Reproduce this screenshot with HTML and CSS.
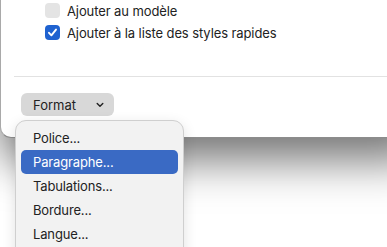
FILE: index.html
```html
<!DOCTYPE html>
<html lang="fr">
<head>
	<meta charset="UTF-8">
	<title>Format</title>
<link rel="stylesheet" href="styles.css">
</head>
<body>
<div class="stage">
	<div class="window">
		<div class="options">
			<label class="option"><span class="box"></span>Ajouter au modèle</label>
			<label class="option"><span class="box checked"><svg width="11" height="11" viewBox="0 0 11 11"><path d="M2 5.8 L4.4 8.3 L9 2.6" fill="none" stroke="#fff" stroke-width="1.9" stroke-linecap="round" stroke-linejoin="round"/></svg></span>Ajouter à la liste des styles rapides</label>
		</div>
		<div class="separator"></div>
		<div class="footer">
			<div class="popup_btn">Format<svg class="chevron" width="8" height="6" viewBox="0 0 8 6"><path d="M1.2 1.5 L4 4.3 L6.8 1.5" fill="none" stroke="#222" stroke-width="1.4" stroke-linecap="round" stroke-linejoin="round"/></svg></div>
		</div>
	</div>

	<ul class="menu">
		<li class="menu_item">Police...</li>
		<li class="menu_item selected">Paragraphe...</li>
		<li class="menu_item">Tabulations...</li>
		<li class="menu_item">Bordure...</li>
		<li class="menu_item">Langue...</li>
	</ul>
</div>
</body>
</html>
```
FILE: styles.css
```css
	body{
		margin: 0;
		background: #fff;
		font-family: Inter, "Liberation Sans", sans-serif;
		font-size: 13px;
		color: #222;
		overflow: hidden;
	}
	.stage{
		position: relative;
		width: 387px;
		height: 247px;
		overflow: hidden;
	}
	.window{
		width: 420px;
		height: 137px;
		background: #fff;
		border-left: 1px solid #a9a9a9;
		border-bottom: 1px solid #8c8c8c;
		border-bottom-left-radius: 11px;
		box-shadow: 0 22px 45px rgba(0,0,0,0.55);
		display: flex;
		flex-direction: column;
	}
	.options{
		display: flex;
		flex-direction: column;
		gap: 7px;
		padding: 3px 0 0 44px;
	}
	.option{
		display: flex;
		align-items: center;
		gap: 7px;
		height: 15px;
		letter-spacing: -0.1px;
	}
	.box{
		width: 15px;
		height: 15px;
		border-radius: 4px;
		background: #e4e4e4;
		display: flex;
		align-items: center;
		justify-content: center;
	}
	.checked{
		background: #1f62d0;
	}
	.separator{
		height: 1px;
		background: #e2e2e2;
		margin: 36px 0 0 13px;
	}
	.footer{
		padding: 16px 0 0 20px;
	}
	.popup_btn{
		width: 71px;
		height: 23px;
		padding: 0 10px 0 12px;
		border-radius: 6px;
		background: #d8d8d8;
		display: flex;
		align-items: center;
		justify-content: space-between;
	}
	.menu{
		position: absolute;
		left: 15px;
		top: 120px;
		width: 157px;
		height: 140px;
		margin: 0;
		padding: 5px;
		list-style: none;
		background: #f2f2f2;
		border: 1px solid #cfcfcf;
		border-radius: 11px;
		box-shadow: 0 4px 14px rgba(0,0,0,0.12);
	}
	.menu_item{
		height: 24px;
		line-height: 24px;
		padding-left: 12px;
		border-radius: 5px;
		letter-spacing: -0.15px;
	}
	.selected{
		background: #3a6ac4;
		color: #fff;
	}
```
